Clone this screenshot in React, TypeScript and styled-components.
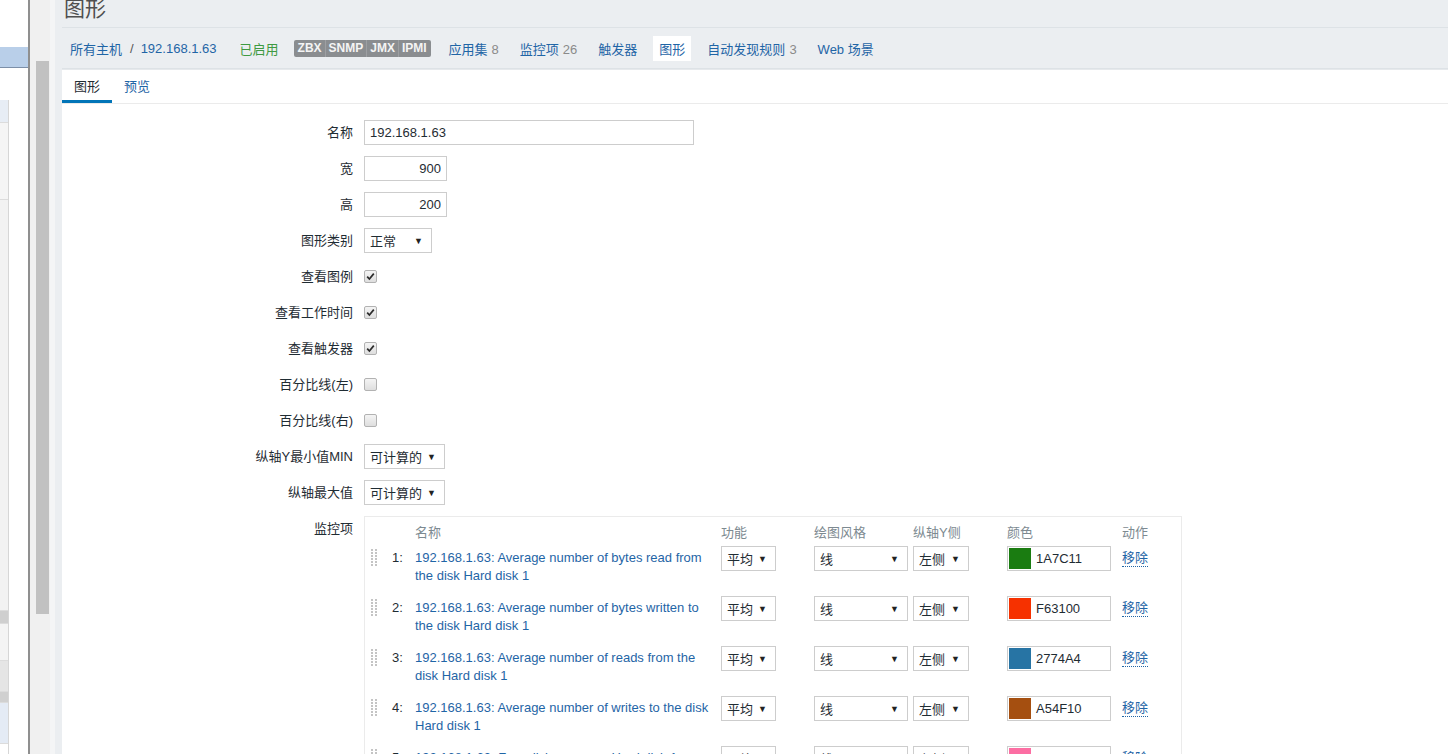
import React from "react"
import styled, { createGlobalStyle } from "styled-components"

const GlobalStyle = createGlobalStyle`
  html, body { margin: 0; padding: 0; }
  body {
    width: 1448px;
    height: 754px;
    overflow: hidden;
    font-family: "Liberation Sans", Arial, "Noto Sans CJK SC", sans-serif;
    font-size: 13px;
    color: #1f2c33;
    background: #fff;
  }
`

const LINK = "#1f65a6"

const Screen = styled.div`
  display: flex;
  width: 1448px;
  height: 754px;
  overflow: hidden;
`

/* fragment of another window on the left */
const OtherWindow = styled.div`
  width: 28px;
  flex: none;
  background: #fff;
  display: flex;
  flex-direction: column;
  overflow: hidden;
`
const OtherTop = styled.div`
  height: 47px;
  flex: none;
`
const OtherBand = styled.div`
  height: 20px;
  flex: none;
  background: #b9cfe9;
  border-bottom: 1px solid #7c8fa8;
`
const OtherList = styled.div`
  margin-top: 32px;
  width: 8px;
  flex: 1;
  display: flex;
  flex-direction: column;
  border-right: 1px solid #d6d6d6;
`
const OtherBlock = styled.div<{ $h: number; $bg: string }>`
  height: ${(p) => p.$h}px;
  flex: none;
  background: ${(p) => p.$bg};
  border-bottom: 1px solid #dcdcdc;
`
const WindowEdge = styled.div`
  width: 2px;
  flex: none;
  background: #8f8f8f;
`
const ScrollTrack = styled.div`
  width: 20px;
  flex: none;
  box-sizing: border-box;
  background: #f0f0f0;
  padding: 61px 0 0 6px;
`
const ScrollThumb = styled.div`
  width: 13px;
  height: 553px;
  background: #c1c1c1;
`

const Page = styled.div`
  flex: 1;
  min-width: 0;
  display: flex;
  flex-direction: column;
  background: #ebeef1;
  border-left: 5px solid #f4f5f6;
  padding-left: 7px;
`
const Header = styled.header`
  flex: none;
  height: 27px;
  border-bottom: 1px solid #dde2e6;
  display: flex;
  align-items: flex-end;
  overflow: hidden;
`
const Title = styled.h1`
  margin: 0 0 8px 2px;
  font-size: 21px;
  line-height: 21px;
  font-weight: normal;
  color: #4f4f4f;
`
const Nav = styled.nav`
  flex: none;
  height: 40px;
  display: flex;
  align-items: center;
  border-bottom: 1px solid #dde2e6;
  padding-left: 8px;
`
const NavLink = styled.span<{ $gap?: number; $active?: boolean }>`
  color: ${LINK};
  margin-right: ${(p) => p.$gap ?? 0}px;
  white-space: nowrap;
  ${(p) =>
    p.$active &&
    `
    background: #fff;
    padding: 3px 6px;
    margin-left: -6px;
  `}
`
const Count = styled.span`
  color: #8a8a8a;
  margin-left: 4px;
`
const Crumb = styled.span`
  color: #555;
  margin: 0 7px 0 8px;
`
const Status = styled.span`
  color: #3e9a42;
  margin-right: 15px;
`
const Badges = styled.span`
  display: flex;
  background: #8a8d90;
  border-radius: 2px;
  margin-right: 18px;
  padding: 0 1px;
`
const Badge = styled.span`
  color: #f4f4f4;
  font-size: 12px;
  font-weight: bold;
  line-height: 17px;
  padding: 0 3px;
  & + & {
    border-left: 1px solid #9d9fa2;
  }
`

const Panel = styled.main`
  flex: none;
  background: #fff;
  border-top: 1px solid #e6e9ec;
`
const Tabs = styled.div`
  height: 33px;
  display: flex;
  border-bottom: 1px solid #ebebeb;
`
const Tab = styled.span<{ $active?: boolean }>`
  line-height: 33px;
  padding: 0 12px;
  color: ${(p) => (p.$active ? "#1f2c33" : LINK)};
  box-shadow: ${(p) => (p.$active ? "inset 0 -3px 0 #0275b8" : "none")};
`

const Form = styled.div`
  display: grid;
  grid-template-columns: 291px auto;
  column-gap: 11px;
  row-gap: 11px;
  padding-top: 16px;
  align-items: center;
`
const Label = styled.label<{ $top?: boolean }>`
  text-align: right;
  line-height: 25px;
  align-self: ${(p) => (p.$top ? "start" : "center")};
`
const Field = styled.div`
  min-height: 25px;
  display: flex;
  align-items: center;
`
const TextInput = styled.input<{ $w: number; $right?: boolean }>`
  width: ${(p) => p.$w}px;
  height: 25px;
  box-sizing: border-box;
  border: 1px solid #cdcdcd;
  padding: 0 5px;
  font: inherit;
  color: #1f2c33;
  text-align: ${(p) => (p.$right ? "right" : "left")};
  outline: none;
`
const Select = styled.div<{ $w: number }>`
  width: ${(p) => p.$w}px;
  height: 25px;
  box-sizing: border-box;
  border: 1px solid #cdcdcd;
  background: #fff;
  display: flex;
  align-items: center;
  justify-content: space-between;
  padding: 0 8px 0 5px;
  white-space: nowrap;
`
const Arrow = styled.span`
  font-size: 9px;
  color: #222;
`
const Check = styled.span`
  width: 11px;
  height: 11px;
  border: 1px solid #b2b2b2;
  border-radius: 2px;
  background: linear-gradient(#f4f4f4, #dedede);
  display: flex;
  align-items: center;
  justify-content: center;
`

const ItemsBox = styled.div`
  width: 818px;
  box-sizing: border-box;
  border: 1px solid #ebebeb;
  border-bottom: none;
`
const ItemsRow = styled.div<{ $head?: boolean }>`
  display: grid;
  grid-template-columns: 21px 29px 306px 93px 99px 94px 115px 1fr;
  height: ${(p) => (p.$head ? 28 : 50)}px;
  align-items: ${(p) => (p.$head ? "center" : "start")};
  padding-top: ${(p) => (p.$head ? 0 : 1)}px;
  box-sizing: border-box;
  overflow: hidden;
`
const HeadCell = styled.span`
  color: #7d8a91;
`
const Grip = styled.span`
  padding: 3px 0 0 6px;
  line-height: 0;
`
const Num = styled.span`
  padding: 3px 0 0 6px;
  line-height: 18px;
`
const ItemName = styled.a`
  color: ${LINK};
  line-height: 18px;
  padding-top: 3px;
  width: 300px;
  text-decoration: none;
`
const ColorBox = styled.div`
  width: 104px;
  height: 25px;
  box-sizing: border-box;
  border: 1px solid #cdcdcd;
  display: flex;
  align-items: center;
  padding-left: 1px;
  gap: 5px;
`
const Swatch = styled.span<{ $c: string }>`
  width: 22px;
  height: 21px;
  background: ${(p) => p.$c};
`
const Remove = styled.a`
  color: ${LINK};
  margin-top: 3px;
  line-height: 17px;
  border-bottom: 1px dotted ${LINK};
  justify-self: start;
`

const GripIcon = () => (
  <svg width="7" height="18" viewBox="0 0 7 18">
    {[0, 3, 6, 9, 12, 15].map((y) =>
      [0, 4].map((x) => <rect key={`${x}-${y}`} x={x} y={y} width="2" height="2" fill="#c4c4c4" />)
    )}
  </svg>
)

const CheckMark = () => (
  <svg width="9" height="9" viewBox="0 0 9 9">
    <path d="M1.2 4.6 L3.4 7 L7.8 1.6" fill="none" stroke="#2b2b2b" strokeWidth="1.7" />
  </svg>
)

const items = [
  { name: "192.168.1.63: Average number of bytes read from the disk Hard disk 1", color: "1A7C11" },
  { name: "192.168.1.63: Average number of bytes written to the disk Hard disk 1", color: "F63100" },
  { name: "192.168.1.63: Average number of reads from the disk Hard disk 1", color: "2774A4" },
  { name: "192.168.1.63: Average number of writes to the disk Hard disk 1", color: "A54F10" },
  { name: "192.168.1.63: Free disk space on Hard disk 1", color: "FC6EA3" },
]

const checks = [
  { label: "查看图例", on: true },
  { label: "查看工作时间", on: true },
  { label: "查看触发器", on: true },
  { label: "百分比线(左)", on: false },
  { label: "百分比线(右)", on: false },
]

export default function App() {
  return (
    <>
      <GlobalStyle />
      <Screen>
        <OtherWindow>
          <OtherTop />
          <OtherBand />
          <OtherList>
            <OtherBlock $h={22} $bg="#e7edf5" />
            <OtherBlock $h={76} $bg="#f5f5f5" />
            <OtherBlock $h={410} $bg="#f2f2f2" />
            <OtherBlock $h={12} $bg="#cfcfcf" />
            <OtherBlock $h={36} $bg="#f4f4f4" />
            <OtherBlock $h={30} $bg="#e5e5e5" />
            <OtherBlock $h={10} $bg="#d0d0d0" />
            <OtherBlock $h={40} $bg="#e4ebf5" />
          </OtherList>
        </OtherWindow>
        <WindowEdge />
        <ScrollTrack>
          <ScrollThumb />
        </ScrollTrack>
        <Page>
          <Header>
            <Title>图形</Title>
          </Header>
          <Nav>
            <NavLink>所有主机</NavLink>
            <Crumb>/</Crumb>
            <NavLink $gap={23}>192.168.1.63</NavLink>
            <Status>已启用</Status>
            <Badges>
              <Badge>ZBX</Badge>
              <Badge>SNMP</Badge>
              <Badge>JMX</Badge>
              <Badge>IPMI</Badge>
            </Badges>
            <NavLink $gap={21}>
              应用集<Count>8</Count>
            </NavLink>
            <NavLink $gap={21}>
              监控项<Count>26</Count>
            </NavLink>
            <NavLink $gap={22}>触发器</NavLink>
            <NavLink $gap={16} $active>
              图形
            </NavLink>
            <NavLink $gap={21}>
              自动发现规则<Count>3</Count>
            </NavLink>
            <NavLink>Web 场景</NavLink>
          </Nav>
          <Panel>
            <Tabs>
              <Tab $active>图形</Tab>
              <Tab>预览</Tab>
            </Tabs>
            <Form>
              <Label>名称</Label>
              <Field>
                <TextInput $w={330} value="192.168.1.63" readOnly />
              </Field>
              <Label>宽</Label>
              <Field>
                <TextInput $w={83} $right value="900" readOnly />
              </Field>
              <Label>高</Label>
              <Field>
                <TextInput $w={83} $right value="200" readOnly />
              </Field>
              <Label>图形类别</Label>
              <Field>
                <Select $w={68}>
                  正常<Arrow>▼</Arrow>
                </Select>
              </Field>
              {checks.map((c) => (
                <React.Fragment key={c.label}>
                  <Label>{c.label}</Label>
                  <Field>
                    <Check>{c.on && <CheckMark />}</Check>
                  </Field>
                </React.Fragment>
              ))}
              <Label>纵轴Y最小值MIN</Label>
              <Field>
                <Select $w={81}>
                  可计算的<Arrow>▼</Arrow>
                </Select>
              </Field>
              <Label>纵轴最大值</Label>
              <Field>
                <Select $w={81}>
                  可计算的<Arrow>▼</Arrow>
                </Select>
              </Field>
              <Label $top>监控项</Label>
              <ItemsBox>
                <ItemsRow $head>
                  <span />
                  <span />
                  <HeadCell>名称</HeadCell>
                  <HeadCell>功能</HeadCell>
                  <HeadCell>绘图风格</HeadCell>
                  <HeadCell>纵轴Y侧</HeadCell>
                  <HeadCell>颜色</HeadCell>
                  <HeadCell>动作</HeadCell>
                </ItemsRow>
                {items.map((it, i) => (
                  <ItemsRow key={it.color}>
                    <Grip>
                      <GripIcon />
                    </Grip>
                    <Num>{i + 1}:</Num>
                    <ItemName>{it.name}</ItemName>
                    <Select $w={55}>
                      平均<Arrow>▼</Arrow>
                    </Select>
                    <Select $w={94}>
                      线<Arrow>▼</Arrow>
                    </Select>
                    <Select $w={56}>
                      左侧<Arrow>▼</Arrow>
                    </Select>
                    <ColorBox>
                      <Swatch $c={`#${it.color}`} />
                      {it.color}
                    </ColorBox>
                    <Remove>移除</Remove>
                  </ItemsRow>
                ))}
              </ItemsBox>
            </Form>
          </Panel>
        </Page>
      </Screen>
    </>
  )
}
